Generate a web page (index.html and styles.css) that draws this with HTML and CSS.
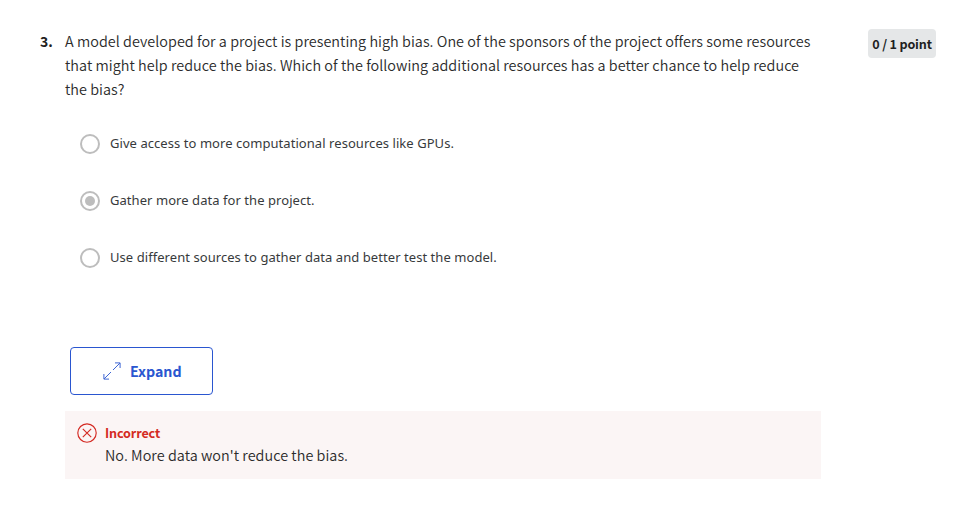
FILE: index.html
```html
<!DOCTYPE html>
<html lang="en">
<head>
<meta charset="utf-8">
<title>Quiz question</title>
<link rel="stylesheet" href="styles.css">
</head>
<body>
<main class="question">
  <div class="number">3.</div>
  <div class="content">
    <p class="prompt"><span class="line">A model developed for a project is presenting high bias. One of the sponsors of the project offers some resources</span> <span class="line">that might help reduce the bias. Which of the following additional resources has a better chance to help reduce</span> <span class="line">the bias?</span></p>
    <div class="options">
      <div class="option"><span class="radio"></span><span class="label">Give access to more computational resources like GPUs.</span></div>
      <div class="option"><span class="radio checked"></span><span class="label">Gather more data for the project.</span></div>
      <div class="option"><span class="radio"></span><span class="label">Use different sources to gather data and better test the model.</span></div>
    </div>
    <button class="expand">
      <svg width="18" height="18" viewBox="0 0 18 18" fill="none" stroke="currentColor" stroke-width=".9"><path d="M1.2 16.8 8 10M10 8l6.8-6.8M12 .9h5.1V6M.9 12v5.1H6"/></svg>
      <span class="expand-label">Expand</span>
    </button>
    <section class="feedback">
      <svg width="20" height="20" viewBox="0 0 20 20" fill="none" stroke="currentColor" stroke-width="1.15"><circle cx="10" cy="10" r="9.2"/><path d="m5.8 5.8 8.4 8.4m0-8.4-8.4 8.4"/></svg>
      <div>
        <div class="verdict">Incorrect</div>
        <div class="reason">No. More data won't reduce the bias.</div>
      </div>
    </section>
  </div>
  <div class="points">0 / 1 point</div>
</main>
</body>
</html>
```
FILE: styles.css
```css
* { box-sizing: border-box; }
body {
  margin: 0;
  background: #fff;
  color: #373a3c;
  font-family: "Noto Sans CJK SC", "Noto Sans", sans-serif;
}
.question {
  display: flex;
  align-items: flex-start;
  padding: 29px 21px 0 40px;
  white-space: nowrap;
}
.number {
  width: 25px;
  font-size: 14px;
  font-weight: 700;
  line-height: 24px;
  color: #1f1f1f;
}
.content { width: 756px; }
.prompt {
  margin: 0;
  color: #2b2b2b;
  font-size: 14.4px;
  font-weight: 350;
  line-height: 24px;
  letter-spacing: .037px;
}
.line { display: table; }
.options {
  display: grid;
  gap: 37px;
  padding: 33px 0 0 15px;
}
.option {
  display: flex;
  align-items: center;
  gap: 10px;
  height: 20px;
  font-family: "Noto Sans", sans-serif;
  font-size: 13px;
  letter-spacing: .058px;
}
.label { margin-top: -2px; }
.radio {
  display: grid;
  place-items: center;
  width: 20px;
  height: 20px;
  border: 2px solid #bdbdbd;
  border-radius: 50%;
}
.checked::after {
  content: "";
  width: 10px;
  height: 10px;
  border-radius: 50%;
  background: #bdbdbd;
}
.expand {
  display: flex;
  align-items: center;
  gap: 9px;
  width: 143px;
  height: 48px;
  margin: 79px 0 0 5px;
  padding: 0 0 0 32px;
  border: 1px solid #2a56d0;
  border-radius: 4px;
  background: #fff;
  color: #2a56d0;
  font: 700 14.2px "Noto Sans CJK SC", sans-serif;
}
.expand-label { line-height: 24px; }
.feedback {
  display: flex;
  gap: 8px;
  height: 68px;
  margin-top: 16px;
  padding: 12px;
  background: #fbf5f5;
  color: #d42a23;
}
.verdict {
  font-size: 12.6px;
  font-weight: 700;
  line-height: 20px;
  letter-spacing: -.13px;
}
.reason {
  color: #2b2b2b;
  font-size: 14.4px;
  font-weight: 350;
  line-height: 24px;
  letter-spacing: .037px;
}
.points {
  display: flex;
  align-items: center;
  justify-content: center;
  width: 68px;
  height: 29px;
  margin-left: auto;
  border-radius: 4px;
  background: #e5e7e8;
  color: #1f1f1f;
  font-size: 12.6px;
  font-weight: 700;
  letter-spacing: -.18px;
}
```
